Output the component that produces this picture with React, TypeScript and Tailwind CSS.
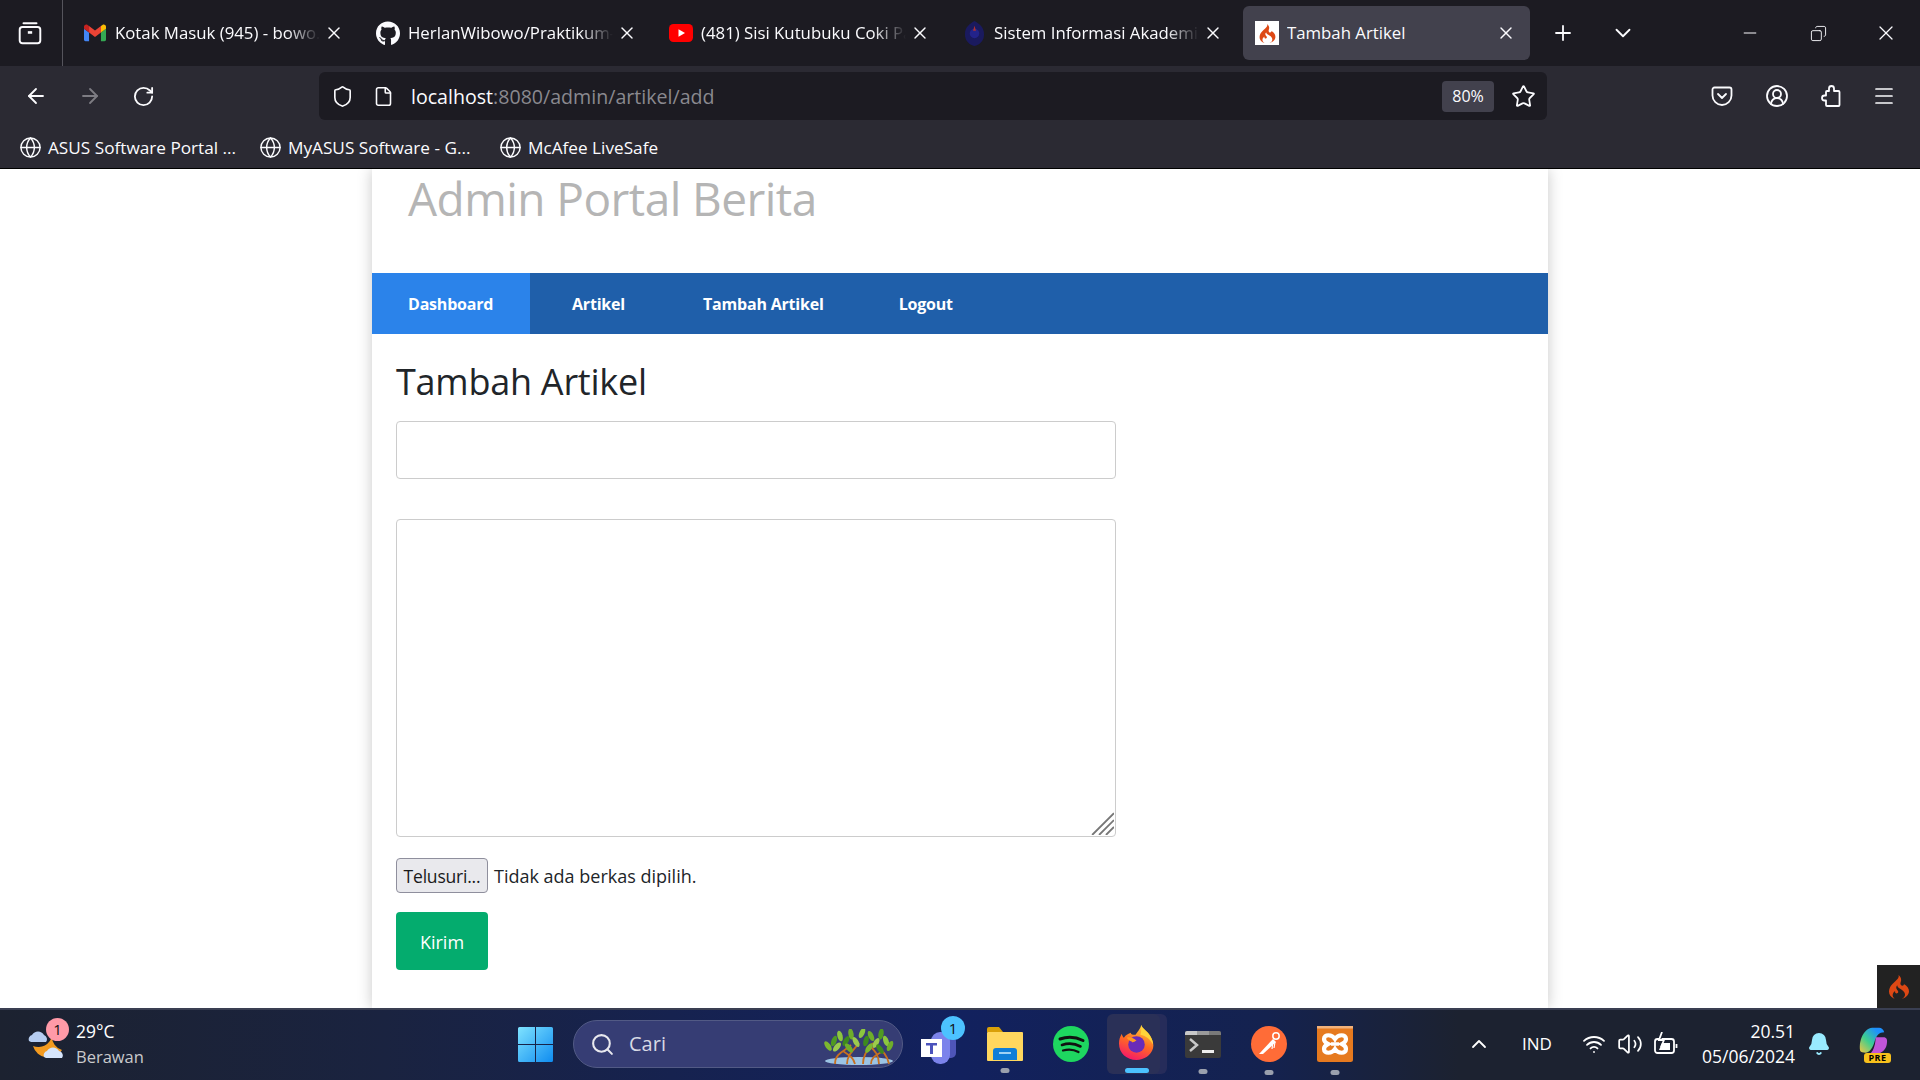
import React from "react";
import { FaGithub } from "react-icons/fa";
import { SiCodeigniter } from "react-icons/si";
import { X, Plus, ChevronDown, ChevronUp, Minus, ArrowLeft, ArrowRight, RotateCw, Shield, File, Star, Globe, Search, Menu, Wifi, Volume2, Bell, Copy, CircleUserRound } from "lucide-react";

function Gmail() {
  return (
    <svg viewBox="0 0 24 24" className="w-[22px] h-[22px] shrink-0">
      <path fill="#4285f4" d="M1.6 21h3.9v-9.5L0 7.4v12c0 .9.7 1.6 1.6 1.6z" />
      <path fill="#34a853" d="M18.5 21h3.9c.9 0 1.6-.7 1.6-1.6v-12l-5.5 4.1z" />
      <path fill="#fbbc04" d="M18.5 4.4v7.1L24 7.4V5.2c0-2-2.3-3.2-3.9-2z" />
      <path fill="#ea4335" d="M5.5 11.5V4.4L12 9.3l6.5-4.9v7.1L12 16.4z" />
      <path fill="#c5221f" d="M0 5.2v2.2l5.5 4.1V4.4L3.9 3.2C2.3 2 0 3.2 0 5.2z" />
    </svg>
  );
}

function Youtube() {
  return (
    <svg viewBox="0 0 24 18" className="w-[24px] h-[18px] shrink-0">
      <rect width="24" height="18" rx="4.5" fill="#ff0000" />
      <path d="M9.5 5.2v7.6L16 9z" fill="#fff" />
    </svg>
  );
}

function Campus() {
  return (
    <svg viewBox="0 0 22 26" className="w-[21px] h-[25px] shrink-0">
      <path d="M11 0 C16 3 21 6 21 14 C21 21 16 25 11 26 C6 25 1 21 1 14 C1 6 6 3 11 0z" fill="#1a1a5e" />
      <circle cx="11" cy="13" r="5" fill="#23238a" />
      <path d="M11 5l1.5 5h-3z" fill="#b03030" />
    </svg>
  );
}

function Flame({ size = 24 }: { size?: number }) {
  return <SiCodeigniter size={size} color="#dd4814" />;
}

function Tab({ icon, title, active = false, fade = true }: { icon: React.ReactNode; title: string; active?: boolean; fade?: boolean }) {
  return (
    <div className={`w-[287px] h-[54px] shrink-0 flex items-center pl-[12px] pr-[14px] rounded-[6px] ${active ? "bg-[#42414d]" : ""}`}>
      <div className="w-[24px] flex justify-center shrink-0">{icon}</div>
      <div
        className={`ml-[8px] flex-1 overflow-hidden whitespace-nowrap text-[16.8px] text-[#fbfbfe] ${fade ? "[mask-image:linear-gradient(to_right,black_84%,transparent_100%)]" : ""}`}
      >
        {title}
      </div>
      <X className="ml-[4px] shrink-0 text-[#fbfbfe]" size={20} strokeWidth={1.7} />
    </div>
  );
}

function Bookmark({ label, width }: { label: string; width: string }) {
  return (
    <div className={`flex items-center ${width}`}>
      <Globe size={23} strokeWidth={1.5} className="text-[#fbfbfe] shrink-0" />
      <span className="ml-[6px] whitespace-nowrap text-[17.2px] text-[#fbfbfe]">{label}</span>
    </div>
  );
}

function Dot() {
  return <span className="absolute left-1/2 -translate-x-1/2 bottom-[-13px] w-[9px] h-[5px] rounded-full bg-[#9aa0ad]" />;
}

const leaves: [number, number, number, string][] = [
  [7, 17, -35, "#7cb82f"], [13, 12, 20, "#4f9a22"], [19, 7, -15, "#8cc63f"], [25, 12, 30, "#3d8a1e"],
  [30, 5, -10, "#6fae2a"], [35, 13, -30, "#9ccb4d"], [41, 4, 25, "#8cc63f"], [45, 12, 15, "#3d8a1e"],
  [50, 7, -25, "#6fae2a"], [55, 14, 30, "#9ccb4d"], [60, 5, 10, "#4f9a22"], [65, 12, -20, "#8cc63f"],
  [69, 17, 25, "#6fae2a"], [16, 18, 40, "#9ccb4d"], [28, 19, -40, "#6fae2a"], [48, 19, 35, "#7cb82f"], [59, 20, -35, "#3d8a1e"],
];

export default function App() {
  return (
    <div className="h-screen w-screen overflow-hidden flex flex-col font-['Open_Sans',sans-serif] bg-white">
      {/* tab strip */}
      <div className="h-[66px] shrink-0 bg-[#1c1b22] flex items-center">
        <div className="w-[63px] h-full flex items-center justify-center pr-[3px] border-r border-[#55545c] shrink-0">
          <svg viewBox="0 0 24 24" className="w-[26px] h-[26px] text-[#fbfbfe]" fill="none" stroke="currentColor" strokeWidth="1.8">
            <rect x="2.5" y="6.5" width="19" height="15" rx="2.5" />
            <path d="M6 3h12" strokeLinecap="round" />
            <path d="M10 11.5h4" strokeWidth="2.4" />
          </svg>
        </div>
        <div className="flex gap-[6px] pl-[8px] items-center">
          <Tab icon={<Gmail />} title="Kotak Masuk (945) - bowo.wibowo@gmail.com" />
          <Tab icon={<FaGithub size={25} color="#fbfbfe" />} title="HerlanWibowo/Praktikum-Web" />
          <Tab icon={<Youtube />} title="(481) Sisi Kutubuku Coki Pardede" />
          <Tab icon={<Campus />} title="Sistem Informasi Akademik Kampus" />
          <Tab
            icon={
              <div className="w-[24px] h-[24px] bg-white flex items-center justify-center">
                <Flame size={19} />
              </div>
            }
            title="Tambah Artikel"
            active
            fade={false}
          />
        </div>
        <Plus size={24} strokeWidth={1.8} className="ml-[21px] text-[#fbfbfe] shrink-0" />
        <ChevronDown size={26} strokeWidth={1.7} className="ml-[35px] text-[#fbfbfe] shrink-0" />
        <Minus size={20} strokeWidth={1.2} className="ml-[104px] text-[#fbfbfe] shrink-0" />
        <Copy size={17} strokeWidth={1.3} className="ml-[50px] text-[#fbfbfe] shrink-0 -scale-x-100" />
        <X size={24} strokeWidth={1.3} className="ml-[47px] text-[#fbfbfe] shrink-0" />
      </div>

      {/* nav toolbar */}
      <div className="h-[60px] shrink-0 bg-[#2b2a33] flex items-center">
        <ArrowLeft size={24} strokeWidth={1.8} className="ml-[24px] text-[#fbfbfe] shrink-0" />
        <ArrowRight size={24} strokeWidth={1.8} className="ml-[30px] text-[#7d7c83] shrink-0" />
        <RotateCw size={23} strokeWidth={1.9} className="ml-[30px] text-[#fbfbfe] shrink-0" />
        <div className="ml-[164px] w-[1228px] h-[48px] rounded-[6px] bg-[#1c1b22] flex items-center shrink-0">
          <Shield size={23} strokeWidth={1.7} className="ml-[12px] text-[#fbfbfe] shrink-0" />
          <File size={21} strokeWidth={1.8} className="ml-[19px] text-[#fbfbfe] shrink-0" />
          <span className="ml-[17px] pt-[2px] text-[19.6px] text-[#fbfbfe] whitespace-nowrap">
            localhost<span className="text-[#8a898f]">:8080/admin/artikel/add</span>
          </span>
          <div className="ml-auto w-[52px] h-[31px] bg-[#42414d] rounded-[4px] text-[#fbfbfe] text-[16px] flex items-center justify-center">80%</div>
          <Star size={25} strokeWidth={1.7} className="ml-[17px] mr-[11px] text-[#fbfbfe] shrink-0" />
        </div>
        <svg viewBox="0 0 24 24" className="ml-[163px] w-[24px] h-[24px] text-[#fbfbfe] shrink-0" fill="none" stroke="currentColor" strokeWidth="1.8">
          <path d="M4.5 3.5h15a2 2 0 0 1 2 2v6a9.5 9.5 0 0 1-19 0v-6a2 2 0 0 1 2-2z" />
          <path d="M8 10l4 4 4-4" strokeLinecap="round" strokeLinejoin="round" />
        </svg>
        <CircleUserRound size={24} strokeWidth={1.8} className="ml-[31px] text-[#fbfbfe] shrink-0" />
        <svg viewBox="0 0 24 24" className="ml-[30px] w-[24px] h-[24px] text-[#fbfbfe] shrink-0" fill="none" stroke="currentColor" strokeWidth="1.8" strokeLinejoin="round">
          <path d="M12.5 2A2.5 2.5 0 0 1 15 4.5V7h4.5a1 1 0 0 1 1 1v13a1 1 0 0 1-1 1H8a1 1 0 0 1-1-1v-4.5H5.5a2.5 2.5 0 0 1 0-5H7V8a1 1 0 0 1 1-1h2V4.5A2.5 2.5 0 0 1 12.5 2z" />
        </svg>
        <Menu size={24} strokeWidth={1.7} className="ml-[29px] text-[#fbfbfe] shrink-0" />
      </div>

      {/* bookmarks */}
      <div className="h-[43px] shrink-0 bg-[#2b2a33] border-b border-black flex items-center pl-[19px] pt-[1px]">
        <Bookmark label="ASUS Software Portal ..." width="w-[240px]" />
        <Bookmark label="MyASUS Software - G..." width="w-[240px]" />
        <Bookmark label="McAfee LiveSafe" width="w-[200px]" />
      </div>

      {/* page */}
      <div className="flex-1 min-h-0 relative overflow-hidden bg-white">
        <div className="mx-auto w-[1176px] h-full bg-white shadow-[0_0_14px_rgba(0,0,0,0.22)]">
          <div className="h-[104px] pl-[36px] text-[46px] leading-[58px] tracking-[-0.55px] text-[#b5b5b5] whitespace-nowrap">Admin Portal Berita</div>
          <nav className="h-[61px] bg-[#1f5faa] flex gap-[5px] text-white font-bold text-[16px] tracking-[-0.2px]">
            <a className="w-[158px] pl-[36px] flex items-center bg-[#2b83ea]">Dashboard</a>
            <a className="ml-[1px] px-[36px] flex items-center">Artikel</a>
            <a className="ml-[1px] px-[36px] flex items-center">Tambah Artikel</a>
            <a className="ml-[-2px] px-[36px] flex items-center">Logout</a>
          </nav>
          <div className="pl-[24px]">
            <h1 className="mt-[23px] text-[36px] leading-[50px] tracking-[-0.25px] text-[#212529] whitespace-nowrap">Tambah Artikel</h1>
            <div className="mt-[14px] w-[720px] h-[58px] border border-[#cccccc] rounded-[4px]" />
            <div className="mt-[40px] w-[720px] h-[318px] border border-[#cccccc] rounded-[4px] relative">
              <svg viewBox="0 0 20 20" className="absolute right-[1px] bottom-[1px] w-[23px] h-[23px] text-[#777]" stroke="currentColor" strokeWidth="1.6">
                <path d="M1 20L20 1M7 20L20 7M13 20L20 13" />
              </svg>
            </div>
            <div className="mt-[21px] flex items-center text-[18px] text-[#212529]">
              <button className="w-[92px] h-[35px] pt-[1px] bg-[#e9e9ed] border border-[#8f8f9d] rounded-[4px] text-[#1a1a1a] text-[17.5px] tracking-[-0.2px] whitespace-nowrap">Telusuri...</button>
              <span className="ml-[6px] pt-[2px] whitespace-nowrap">Tidak ada berkas dipilih.</span>
            </div>
            <button className="mt-[19px] w-[92px] h-[58px] pt-[2px] bg-[#04ac6e] rounded-[4px] text-white text-[18px]">Kirim</button>
          </div>
        </div>
        <div className="absolute right-0 bottom-0 w-[43px] h-[43px] bg-[#222222] flex items-center justify-center">
          <Flame size={24} />
        </div>
      </div>

      {/* taskbar */}
      <div className="h-[72px] shrink-0 border-t-2 border-[#3a3f52] pb-[2px] flex items-center text-white bg-[linear-gradient(90deg,#1c2230_0%,#1a2340_20%,#12215e_50%,#14224f_66%,#1c2230_76%,#1c2230_100%)]">
        <div className="ml-[28px] w-[38px] h-[36px] relative shrink-0">
          <svg viewBox="0 0 38 36" className="w-[38px] h-[36px]">
            <path d="M5 20a16 16 0 0 0 29 4a14 14 0 0 1 -10 -14a14 14 0 0 1 -19 10z" fill="#f39a1f" />
            <path d="M1 15a4.5 4.5 0 0 1 3-6 7 7 0 0 1 12 0 4.5 4.5 0 0 1 2 7H3z" fill="#b6cdf1" />
            <path d="M16 31a4.5 4.5 0 0 1 3-6 7 7 0 0 1 12 0 4.5 4.5 0 0 1 3 7H18z" fill="#d5e4fb" />
          </svg>
          <span className="absolute left-[18px] top-[-8px] w-[23px] h-[23px] rounded-full bg-[#ff9aa8] text-[#111] text-[15px] flex items-center justify-center">1</span>
        </div>
        <div className="ml-[10px] w-[442px] shrink-0 leading-[25px] pb-[1px]">
          <div className="text-[17.5px]">29°C</div>
          <div className="text-[#c9cacc] text-[16.5px]">Berawan</div>
        </div>
        <svg viewBox="0 0 35 35" className="w-[35px] h-[35px] shrink-0">
          <defs>
            <linearGradient id="w" x1="0" y1="0" x2="1" y2="1">
              <stop offset="0" stopColor="#7fe3ff" />
              <stop offset="1" stopColor="#0f8cf0" />
            </linearGradient>
          </defs>
          <path fill="url(#w)" d="M0 1.5A1.5 1.5 0 0 1 1.5 0H17v17H0zM18 0h15.5A1.5 1.5 0 0 1 35 1.5V17H18zM0 18h17v17H1.5A1.5 1.5 0 0 1 0 33.5zM18 18h17v15.5a1.5 1.5 0 0 1-1.5 1.5H18z" />
        </svg>
        <div className="ml-[20px] w-[330px] h-[48px] shrink-0 rounded-full border border-[#525a85] bg-[#363d74] flex items-center relative">
          <Search size={25} strokeWidth={2} className="ml-[16px] text-[#e8e8ee] shrink-0" />
          <span className="ml-[14px] text-[20px] text-[#d8d9e4]">Cari</span>
          <svg viewBox="0 0 76 36" className="absolute right-[5px] bottom-[2px] w-[76px] h-[36px]">
            <ellipse cx="38" cy="32" rx="34" ry="4" fill="#9cc4e4" />
            <g fill="none" stroke="#c8701f" strokeWidth="1.8">
              <path d="M14 35C14 24 24 22 30 16M26 35C26 26 32 22 38 14M42 35C42 26 46 22 52 14M58 35C58 26 54 22 48 16M68 35C66 26 62 22 56 18M34 35C32 28 28 26 22 22M50 35C50 28 56 26 62 22" />
            </g>
            {leaves.map(([x, y, r, c], i) => (
              <ellipse key={i} cx={x} cy={y} rx="2.6" ry="5.5" fill={c} transform={`rotate(${r} ${x} ${y})`} />
            ))}
          </svg>
        </div>
        {/* teams */}
        <div className="ml-[17px] w-[40px] h-[40px] relative shrink-0">
          <svg viewBox="0 0 40 40" className="w-[40px] h-[40px]">
            <rect x="25" y="12" width="11" height="22" rx="5" fill="#4e55b8" />
            <rect x="11" y="8" width="19" height="32" rx="9" fill="#7b83eb" />
            <rect x="1" y="15" width="21" height="18" fill="#fff" />
            <path d="M6 19h11v2.5h-4V30h-3v-8.5H6z" fill="#4b53bc" />
          </svg>
          <span className="absolute right-[-5px] top-[-8px] w-[24px] h-[24px] rounded-full bg-[#4cc2ff] text-[#111] text-[15px] flex items-center justify-center">1</span>
        </div>
        {/* files */}
        <div className="ml-[27px] w-[36px] h-[34px] relative shrink-0">
          <svg viewBox="0 0 36 34" className="w-[36px] h-[34px]">
            <path d="M0 2a2 2 0 0 1 2-2h10l4 5H0z" fill="#d9a008" />
            <rect x="0" y="5" width="36" height="29" rx="1" fill="#ffd75e" />
            <path d="M6 33v-9a3 3 0 0 1 3-3h18a3 3 0 0 1 3 3v9z" fill="#0f7ed8" />
            <rect x="12" y="25" width="12" height="2" fill="#9ed2f5" />
          </svg>
          <span className="absolute left-1/2 -translate-x-1/2 bottom-[-12px] w-[9px] h-[5px] rounded-full bg-[#9aa0ad]" />
        </div>
        {/* spotify */}
        <svg viewBox="0 0 36 36" className="ml-[30px] w-[36px] h-[36px] shrink-0">
          <circle cx="18" cy="18" r="18" fill="#1ed760" />
          <g fill="none" stroke="#111" strokeLinecap="round">
            <path d="M7 13C14 10.5 23 11 30 14.5" strokeWidth="3" />
            <path d="M9 19C15 17 22 17.5 27.5 20.5" strokeWidth="2.6" />
            <path d="M10 24.5C15 23 21 23.5 25.5 26" strokeWidth="2.2" />
          </g>
        </svg>
        {/* firefox */}
        <div className="ml-[18px] w-[60px] h-[60px] shrink-0 relative">
          <div className="absolute left-[7px] top-0 bottom-0 right-0 rounded-[6px] bg-[#262c5a]" />
          <div className="absolute inset-0 right-[7px] rounded-[6px] bg-[#2a3057] flex items-center justify-center pb-[4px] pl-[6px]">
            <svg viewBox="0 0 36 36" className="w-[35px] h-[35px]">
              <defs>
                <linearGradient id="ff" x1="0.7" y1="0" x2="0.3" y2="1">
                  <stop offset="0" stopColor="#ffd43a" />
                  <stop offset="0.5" stopColor="#ff6b22" />
                  <stop offset="1" stopColor="#f5156c" />
                </linearGradient>
              </defs>
              <path fill="url(#ff)" d="M23 0c1 4 6 6 9 11 3 5 4 9 3 13-2 7-9 12-17 12C8 36 0 29 0 19c0-4 1-7 3-10 0 2 1 3 2 4 2-3 5-4 7-5 0 2 2 2 5 2 2-3 5-6 6-10z" />
              <path d="M23 0c1 4 6 6 9 11 2 3 3 6 3 9-3-6-8-9-13-10 1-3 1-7 1-10z" fill="#ffd43a" />
              <circle cx="18" cy="20" r="8.5" fill="#6a2bb8" />
              <path d="M8 13c3-1 6 0 10 3-2 1-4 3-5 1-2-1-4-2-5-4z" fill="#ff9a24" />
            </svg>
          </div>
          <span className="absolute left-[18px] bottom-[1px] w-[24px] h-[5px] rounded-full bg-[#4cc2ff]" />
        </div>
        {/* terminal */}
        <div className="ml-[18px] w-[36px] h-[27px] shrink-0 relative rounded-[2px] bg-[#3a3a3a]">
          <div className="h-[4px] flex rounded-t-[2px] overflow-hidden">
            <div className="w-[12px] bg-[#c8c8c8]" />
            <div className="w-[12px] bg-[#9a9a9a]" />
            <div className="w-[12px] bg-[#7a7a7a]" />
          </div>
          <svg viewBox="0 0 36 23" className="w-[36px] h-[23px]">
            <path d="M5 4l7 6-7 6" stroke="#c8c8c8" strokeWidth="2.5" fill="none" />
            <rect x="17" y="15" width="12" height="3" fill="#eee" />
          </svg>
          <span className="absolute left-1/2 -translate-x-1/2 bottom-[-16px] w-[9px] h-[5px] rounded-full bg-[#9aa0ad]" />
        </div>
        {/* postman */}
        <div className="ml-[30px] w-[36px] h-[36px] shrink-0 relative">
          <svg viewBox="0 0 36 36" className="w-[36px] h-[36px]">
            <circle cx="18" cy="18" r="18" fill="#ff6c37" />
            <path d="M8 28L22 13l3 3L12 28z" fill="#fff" />
            <circle cx="25" cy="10" r="3.2" fill="none" stroke="#fff" strokeWidth="1.5" />
            <path d="M22 15l-1 8M24 16l-1 6" stroke="#fff" strokeWidth="1.2" />
          </svg>
          <Dot />
        </div>
        {/* xampp */}
        <div className="ml-[30px] w-[36px] h-[36px] shrink-0 relative">
          <svg viewBox="0 0 36 36" className="w-[36px] h-[36px]">
            <rect width="36" height="36" rx="2.5" fill="#e67a1f" />
            <rect x="0" y="0" width="36" height="2.5" fill="#f2b27a" />
            <path d="M18 13c-3-5-11-5-11 0 0 2 2 4 4 5-2 1-4 3-4 5 0 5 8 5 11 0 3 5 11 5 11 0 0-2-2-4-4-5 2-1 4-3 4-5 0-5-8-5-11 0z" fill="none" stroke="#fff" strokeWidth="4.2" />
            <path d="M14 18h8" stroke="#fff" strokeWidth="3.5" />
          </svg>
          <Dot />
        </div>
        <ChevronUp size={24} strokeWidth={1.8} className="ml-[114px] shrink-0 text-white" />
        <span className="ml-[28px] w-[36px] shrink-0 text-[17px] text-white text-center">IND</span>
        <Wifi size={24} strokeWidth={1.8} className="ml-[27px] shrink-0" />
        <Volume2 size={26} strokeWidth={1.6} className="ml-[11px] shrink-0" />
        <svg viewBox="0 0 24 24" className="ml-[11px] w-[24px] h-[24px] shrink-0" fill="none" stroke="#fff" strokeWidth="1.8">
          <rect x="1" y="7" width="19" height="14" rx="2.5" />
          <path d="M22.5 12v4" />
          <path d="M8 0l-3 8h5l-3 7" fill="#1c2230" />
          <path d="M5 18l3-7h8v7z" fill="#fff" stroke="none" />
        </svg>
        <div className="w-[117px] shrink-0 text-right text-[17.5px] leading-[25px] pb-[1px]">
          <div>20.51</div>
          <div>05/06/2024</div>
        </div>
        <Bell size={24} fill="#99ebff" color="#99ebff" className="ml-[12px] shrink-0" />
        <div className="ml-[25px] w-[35px] h-[35px] relative shrink-0">
          <svg viewBox="0 0 35 35" className="w-[35px] h-[30px]">
            <defs>
              <linearGradient id="cp" x1="0" y1="1" x2="1" y2="0">
                <stop offset="0" stopColor="#f5c542" />
                <stop offset="0.4" stopColor="#3ecf8e" />
                <stop offset="0.8" stopColor="#1e90ff" />
              </linearGradient>
            </defs>
            <path d="M2 28C0 16 6 2 16 1h8c3 0 5 2 6 5-6 0-9 4-11 10-2 8-6 14-11 14-3 0-5-1-6-2z" fill="url(#cp)" />
            <path d="M20 12h9c4 0 5 3 4 8-1 6-6 11-12 11h-7c4-4 6-12 6-19z" fill="#c155d8" />
          </svg>
          <span className="absolute left-[8px] bottom-[-1px] w-[27px] h-[10px] rounded-[3px] bg-[#f8c11c] text-black text-[9px] font-bold leading-[10px] text-center tracking-[0.5px]">PRE</span>
        </div>
      </div>
    </div>
  );
}
